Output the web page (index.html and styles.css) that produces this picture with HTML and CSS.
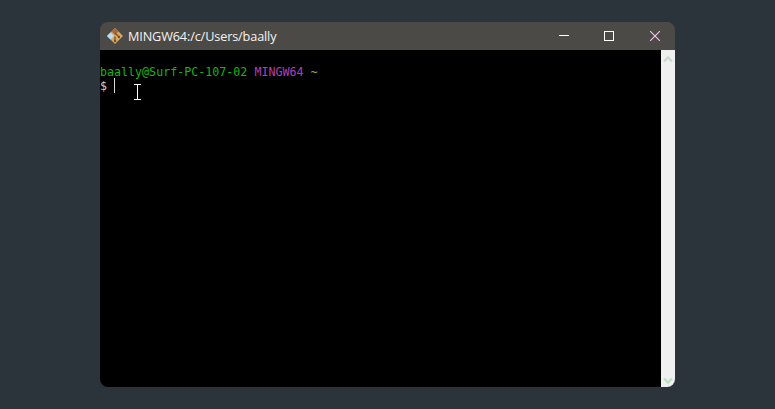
FILE: index.html
```html
<!DOCTYPE html>
<html lang="en">
<head>
<meta charset="utf-8">
<title>MINGW64</title>
<link rel="stylesheet" href="styles.css">
</head>
<body>
<main class="window">
  <header class="titlebar">
    <svg class="app-icon" width="18" height="18" viewBox="0 0 18 18">
      <path d="M9 1 17 9 9 17 1 9Z" fill="#d3ab62"/>
      <path d="M5.500 4.500 9 1 12.500 4.500 9 8Z" fill="#a8683f"/>
      <path d="M1 9 4.500 5.500 8 9 4.500 12.500Z" fill="#b7ddf8"/>
      <path d="M9 6 13 10M9 9.500 9 14" stroke="#7a4a2d" stroke-width="1.300" fill="none"/>
      <circle cx="9" cy="14" r="1.200" fill="#7a4a2d"/>
      <circle cx="13" cy="10" r="1.200" fill="#7a4a2d"/>
    </svg>
    <span class="title">MINGW64:/c/Users/baally</span>
    <div class="controls">
      <button class="ctl" aria-label="Minimize"><svg width="10" height="10" viewBox="0 0 10 10"><path d="M0 4.500H10" stroke="#fff"/></svg></button>
      <button class="ctl" aria-label="Maximize"><svg width="10" height="10" viewBox="0 0 10 10"><rect x=".5" y=".5" width="9" height="9" fill="none" stroke="#fff"/></svg></button>
      <button class="ctl" aria-label="Close"><svg width="10" height="10" viewBox="0 0 10 10"><path d="M0 0 10 10M10 0 0 10" stroke="#f4c6ee" stroke-width="1.100"/></svg></button>
    </div>
  </header>
  <div class="body">
    <div class="terminal">
      <div class="line"><span class="green">baally@Surf-PC-107-02</span> <span class="purple">MINGW64</span> <span class="yellow">~</span></div>
      <div class="line prompt"><span class="light">$</span><span class="caret"></span></div>
      <svg class="ibeam" width="9" height="16" viewBox="0 0 9 16"><path d="M1 .5H8M1 15.500H8M4.500 .5V15.500" stroke="#fff" stroke-width="1"/></svg>
    </div>
    <aside class="scrollbar">
      <svg width="10" height="7" viewBox="0 0 10 7"><path d="M1 5.500 5 1.500 9 5.500" fill="none" stroke="#c6dcc6" stroke-width="2.200"/></svg>
      <svg width="10" height="7" viewBox="0 0 10 7"><path d="M1 1.500 5 5.500 9 1.500" fill="none" stroke="#b9e0bf" stroke-width="2.200"/></svg>
    </aside>
  </div>
</main>
</body>
</html>
```
FILE: styles.css
```css
* { box-sizing: border-box; }
html, body { height: 100%; }
body {
  margin: 0;
  padding: 22px 100px;
  background: #2b343b;
  overflow: hidden;
}
.window {
  width: 575px;
  height: 365px;
  border-radius: 8px;
  overflow: hidden;
  display: flex;
  flex-direction: column;
}
.titlebar {
  height: 28px;
  flex: none;
  background: #4c4a47;
  display: flex;
  align-items: center;
  padding-left: 6px;
  color: #f3f3f3;
  font: 12.7px/1 "Open Sans", "Liberation Sans", sans-serif;
}
.app-icon { flex: none; margin-right: 4px; }
.title { flex: 1; letter-spacing: -0.14px; }
.controls { display: flex; gap: 5px; height: 100%; }
.ctl {
  width: 40px;
  height: 100%;
  border: 0;
  padding: 0;
  background: none;
  display: flex;
  align-items: center;
  justify-content: center;
}
.ctl:last-child { margin-left: 1px; }
.body { flex: 1; display: flex; min-height: 0; }
.terminal {
  flex: 1;
  position: relative;
  background: #000;
  padding-top: 15px;
  font: 11.67px/14px "DejaVu Sans Mono", monospace;
}
.line { height: 14px; display: flex; }
.line span { white-space: pre; }
.line > span + span { margin-left: 7px; }
.green { color: #14b514; }
.purple { color: #b23fb2; }
.yellow { color: #a8a82a; }
.light { color: #cccccc; }
.line > .caret {
  width: 1px;
  height: 15px;
  background: #d8d8d8;
  margin-left: 7px;
  margin-top: -1px;
}
.ibeam { position: absolute; left: 33px; top: 34px; }
.scrollbar {
  width: 14px;
  flex: none;
  background: #f0f0f0;
  display: flex;
  flex-direction: column;
  justify-content: space-between;
  align-items: center;
  padding: 6px 0 3px;
}
```
